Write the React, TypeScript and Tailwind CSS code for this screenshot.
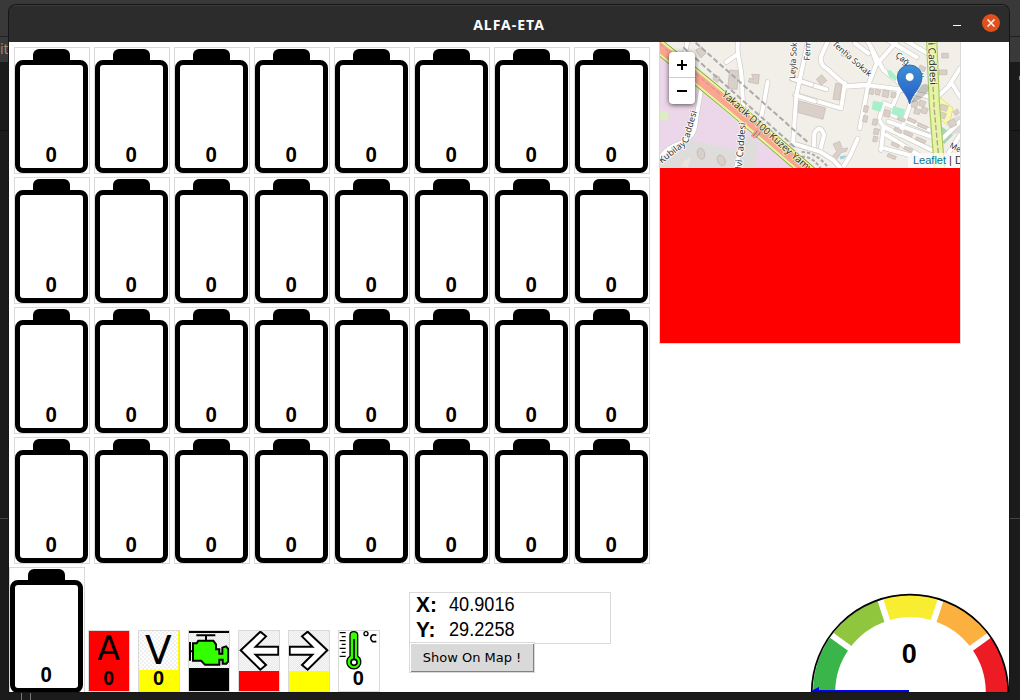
import React from "react";

const cells = Array.from({ length: 32 }, (_, i) => i);

function Battery({ className = "" }: { className?: string }) {
  return (
    <div className={`w-[76px] h-[127px] shrink-0 border border-[#d9d9d9] bg-white flex flex-col items-center pr-px pt-px ${className}`}>
      <div className="w-[37px] h-[11px] shrink-0 rounded-t-[6px] bg-black" />
      <div className="w-[73px] h-[113px] shrink-0 rounded-[8px] border-[5px] border-black bg-white flex items-end justify-center pb-[1px]">
        <span className="inline-block scale-x-[0.93] text-[22px] leading-[24px] font-bold">0</span>
      </div>
    </div>
  );
}

function Tile({ viewBox, children }: { viewBox: string; children: React.ReactNode }) {
  return (
    <div className="w-[42px] h-[62px] shrink-0 border border-[#d9d9d9] bg-white">
      <svg viewBox={viewBox} className="block w-[40px] h-[60px]">
        <defs>
          <pattern id="check" width="12" height="12" patternUnits="userSpaceOnUse">
            <rect width="12" height="12" fill="#fff" />
            <path d="M0 0h6v6h-6zM6 6h6v6h-6z" fill="#f0f0f0" />
          </pattern>
          <pattern id="fine" width="6" height="6" patternUnits="userSpaceOnUse">
            <rect width="6" height="6" fill="#f7f7f7" />
            <path d="M0 0h3v3h-3zM3 3h3v3h-3z" fill="#e9e9e9" />
          </pattern>
        </defs>
        {children}
      </svg>
    </div>
  );
}

const arrow = "M104 80H172L141 49L158 35L217 91L158 149L141 135L172 104H104Z";

const westRoads = [
  "M98 0L90 40",
  "M250 0Q244 30 254 70Q262 110 262 160L268 240L262 300L240 400",
  "M246 44L214 66",
  "M338 126L318 235",
  "M138 150L118 270Q110 295 70 312Q30 325 8 365",
  "M460 0L424 166L414 310L495 335L535 360L570 400",
  "M412 116L470 134M424 166L480 184",
];
const eastRoads = [
  "M70 0L48 50Q44 75 66 86L124 138L190 134L215 70L198 22M150 10L190 40M-40 116L64 148M120 130L108 205L-30 164",
  "M190 134L164 265M120 140L190 136L284 148L370 170L400 168",
  "M186 0L235 90L290 134M225 62L275 5M248 0L335 52M300 0L370 42",
  "M284 148L262 200L236 190L222 240L236 260L228 330M320 180L284 285M236 260L380 330M250 245L384 292M262 225L372 270M244 285L350 350M240 325L312 345",
  "M400 168L430 140L465 85M440 130L465 170M408 300L465 245M430 340L465 285M400 350L440 384",
  "M158 296L134 350L112 384M26 330L28 280Q45 250 57 285L46 330M-40 310L45 335L85 360L115 388",
];
const eastBuildings = [
  "M34 118L50 104L66 122L48 136Z", "M92 130l18 2-6 48-20-2z", "M-20 182l82 22-8 34-74-20z",
  "M194 146l14 4-4 14-13-3z", "M213 148l14 4-4 14-13-3z", "M235 150l18 3-4 20-18-4z", "M260 156l14 4-4 14-13-3z",
  "M178 196l13 3-4 18-13-2z", "M176 226l13 3-4 18-13-2z", "M205 236l15 3-5 17-14-2z", "M208 265l16 3-5 16-14-2z", "M206 288l13 3-4 15-12-2z",
  "M322 182l18 4-6 18-16-4z", "M345 180l18 6-6 14-16-4z", "M330 204l18 6-6 14-16-4z", "M352 200l18 6-6 16-16-4z", "M240 208l16 4-4 20-16-4z",
  "M280 228l22 10-4 9-22-10z", "M310 232l24 10-4 9-24-10z", "M340 248l28 12-4 9-28-12z", "M270 262l22 10-4 9-22-10z", "M300 272l24 10-4 9-24-10z", "M335 290l28 12-4 9-28-12z", "M262 305l22 10-4 9-22-10z", "M300 318l24 10-4 9-24-10z", "M250 340l24 10-4 9-24-10z",
  "M84 312L104 304L112 326L128 324L124 334L108 338L94 360L80 352L95 334Z",
  "M408 192l22 6-6 16-20-6z", "M406 215l18 6-6 16-14-6z", "M428 246l18-10 10 18-18 10z", "M445 215l12-8 6 12-12 8z",
  "M402 90h24v14h-24z", "M410 40h20v14h-20z", "M345 75l18 8-6 12-16-6z", "M112 28l22 8-6 18-20-8z",
];

function Roads({ paths }: { paths: string[] }) {
  return (
    <g fill="none" strokeLinejoin="round" strokeLinecap="round">
      {paths.map((d) => <path key={d} d={d} stroke="#cfccc8" strokeWidth="16" />)}
      {paths.map((d) => <path key={d} d={d} stroke="#fff" strokeWidth="12" />)}
    </g>
  );
}

function MapView() {
  return (
    <div className="relative h-[126px] w-[300px] overflow-hidden bg-[#f2efe9]">
      <svg width="300" height="126" viewBox="0 0 300 126" className="block" style={{ fontFamily: '"Noto Sans", sans-serif' }}>
        <defs>
          <linearGradient id="pin" x1="0" y1="0" x2="0" y2="1">
            <stop offset="0" stopColor="#3d8fd3" /><stop offset="1" stopColor="#245bc8" />
          </linearGradient>
        </defs>
        <g transform="translate(-5 -2) scale(.33333)">
          <path d="M15 48L140 155L230 230L420 390H-5Z" fill="#ebd7e9" />
          <path d="M92 298L250 330L240 390H15V350Z" fill="#dedddb" />
          <path d="M262 286L310 308L300 390H236Z" fill="#dedddb" />
          <path d="M15 213H40V241H15Z" fill="#dcedc4" />
          <g fill="#d9d0c9" stroke="#bfb3aa" strokeWidth="2">
            <path d="M122 30L140 20L154 38L138 54ZM224 90L251 92L246 148L218 146ZM290 103L313 104L310 132L280 126L284 114L296 118ZM178 104L195 112L188 128L174 118Z" />
            <ellipse cx="138" cy="341" rx="11" ry="17" transform="rotate(-12 138 341)" />
            <ellipse cx="199" cy="361" rx="11" ry="17" transform="rotate(-25 199 361)" />
            <path d="M88 362L108 352L98 384L80 378Z" fill="#eee5da" stroke="none" />
          </g>
        </g>
        <g transform="translate(145 -2) scale(.33333)">
          <path d="M408 258L445 285L418 312L404 300Z" fill="#a5d8b8" />
          <path d="M404 172L444 204L432 258L402 235Z" fill="#f8f8b0" stroke="#e4e47a" strokeWidth="3" />
          <path d="M424 245L465 225V275L440 285Z" fill="#dddcd9" />
          <Roads paths={eastRoads} />
          <g fill="#d9d0c9" stroke="#c5b8ad" strokeWidth="2">{eastBuildings.map((d) => <path key={d} d={d} />)}</g>
          <path d="M246 92L256 90L276 112L272 124L252 110ZM204 182L236 188L226 216L200 208ZM264 198L300 208L294 234L260 222Z" fill="#a7f0cb" />
          <path d="M380 0L388 190L404 390" stroke="#a9c765" strokeWidth="34" fill="none" />
          <path d="M380 0L388 190L404 390" stroke="#e5f5a2" strokeWidth="27" fill="none" />
          <path d="M384 140L388 210L400 340" stroke="#b59f94" strokeWidth="4" strokeDasharray="16 7" fill="none" />
          <path d="M104 349L126 346L116 357L106 358Z" fill="#9ed3df" />
          <path d="M-10 336Q30 335 68 380M-10 350Q24 348 50 390" stroke="#aaa" strokeWidth="6" strokeDasharray="10 6" fill="none" />
        </g>
        <g transform="translate(-5 -2) scale(.33333)">
          <Roads paths={westRoads} />
          <g fill="none">
            <path d="M122 8L462 310M85 22L420 322" stroke="#aaa" strokeWidth="6" strokeDasharray="16 8" />
            <path d="M-5 6L140 124L240 207L500 430" stroke="#86a539" strokeWidth="45" />
            <path d="M-5 6L140 124L240 207L500 430" stroke="#e6f6a2" strokeWidth="40" />
            <path d="M-5 6L140 124L240 207L500 430" stroke="#f9a58f" strokeWidth="28" />
            <path d="M14 12L200 166" stroke="#bf7f94" strokeWidth="2" strokeDasharray="14 6" />
            <path d="M292 292L314 266" stroke="#f5a090" strokeWidth="14" />
            <path d="M294 288L308 272M302 294L316 278" stroke="#777" strokeWidth="3" />
          </g>
          <g fill="#333" stroke="#fff" strokeWidth="5" paintOrder="stroke" strokeLinejoin="round">
            <text fontSize="29.5" stroke="#f3f3c0" transform="translate(199 166) rotate(41.5)">Yakacık D100 Kuzey Yamy</text>
            <text fontSize="27" transform="translate(20 371) rotate(-38)">Kubilay</text>
            <text fontSize="27" transform="translate(98 311) rotate(-74)">Caddesi</text>
            <text fontSize="28" transform="translate(260 388) rotate(-85)">lvi Caddesi</text>
            <text fontSize="25" transform="translate(420 116) rotate(-87)">Leyla Sokak</text>
            <text fontSize="25" transform="translate(464 62) rotate(-87)">Ferman</text>
          </g>
        </g>
        <g transform="translate(145 -2) scale(.33333)">
          <g fill="#333" stroke="#fff" strokeWidth="5" paintOrder="stroke" strokeLinejoin="round">
            <text fontSize="25" transform="translate(80 14) rotate(41)">Tenha Sokak</text>
            <text fontSize="25" transform="translate(270 48) rotate(40)">Çağ</text>
            <text fontSize="25" transform="translate(340 112) rotate(40)">k</text>
            <text fontSize="30" stroke="#f3f8d0" transform="translate(369 8) rotate(87)">i Caddesi</text>
            <text fontSize="24" transform="translate(432 322) rotate(25)">Mer</text>
          </g>
          <path d="M316 190L350 135Q375 125 370 152Q352 180 316 190Z" fill="#555" opacity=".3" />
          <path d="M314 192C307 160 278 145 277 111A37 36 0 0 1 351 111C350 145 321 160 314 192Z" fill="url(#pin)" stroke="#2f6fae" strokeWidth="3" />
          <circle cx="314" cy="111" r="13" fill="#fff" stroke="#3474b7" strokeWidth="2" />
        </g>
      </svg>
      <div className="absolute left-[9px] top-[10px] w-[26px] rounded-[4px] bg-white shadow-[0_1px_5px_rgba(0,0,0,0.65)]">
        <div className="h-[26px] border-b border-[#ccc] flex items-center justify-center"><svg width="10" height="10"><path d="M0 5H10M5 0V10" stroke="#000" strokeWidth="2" /></svg></div>
        <div className="h-[26px] flex items-center justify-center"><svg width="10" height="2"><path d="M0 1H10" stroke="#000" strokeWidth="2" /></svg></div>
      </div>
      <div className="absolute left-[248px] bottom-0 h-[15px] w-[90px] whitespace-nowrap bg-white/70 pl-[5px] text-[11px] leading-[15px] text-[#333]"><span className="text-[#0078a8]">Leaflet</span> | Data</div>
    </div>
  );
}

function arc(a: number, b: number) {
  const p = (r: number, d: number) => {
    const t = (d * Math.PI) / 180;
    return `${101.5 - r * Math.cos(t)} ${100.5 - r * Math.sin(t)}`;
  };
  return `M${p(97.5, a)}A97.5 97.5 0 0 1 ${p(97.5, b)}L${p(75.3, b)}A75.3 75.3 0 0 0 ${p(75.3, a)}Z`;
}

const bands = ["#39b54a", "#8fc63d", "#f9ed32", "#fbb040", "#ed1c24"];

function Gauge() {
  return (
    <svg width="200" height="100" viewBox="0 0 200 100" className="block self-end">
      {bands.map((c, i) => <path key={c} d={arc(i * 36, i * 36 + 36)} fill={c} />)}
      {[36, 72, 108, 144].map((a) => (
        <path key={a} d="M0 100.5H32" stroke="#fff" strokeWidth="6" transform={`rotate(${a} 101.5 100.5)`} />
      ))}
      <circle cx="101" cy="101" r="98.3" fill="none" stroke="#000" strokeWidth="1.7" />
      <text x="100.3" y="71" fontSize="27" fontWeight="700" textAnchor="middle">0</text>
      <path d="M3 98.5L10 95V98H100V100H3Z" fill="#00f" />
    </svg>
  );
}

export default function App() {
  return (
    <div className="relative flex h-[700px] w-[1020px] overflow-hidden bg-[#1b1b1b] pl-[9px] pt-[5px] text-black" style={{ fontFamily: '"Liberation Sans", Arial, sans-serif' }}>
      <div className="absolute inset-x-0 top-0 h-[62px] bg-[#393939]">
        <div className="h-[37px] border-b border-[#202020]" />
        <div className="pt-[4px] text-[14px] leading-[16px] text-[#a08a68]" style={{ fontFamily: '"Noto Sans", sans-serif' }}>it</div>
      </div>
      <div className="absolute inset-x-0 top-[130px] h-px bg-[#101010]" />
      <div className="absolute inset-x-0 top-[518px] h-px bg-[#444]" />
      <div className="absolute right-0 top-[76px] h-[4px] w-px bg-[#8976d8]" />
      <div className="absolute left-[21px] top-[693px] h-[7px] w-[10px] border-x border-[#777]" />
      <div className="relative w-[1000px] h-[687px] overflow-hidden rounded-t-[7px] shadow-[0_0_0_1px_#161616]">
        <header className="relative flex h-[37px] items-center justify-center bg-[#2c2c2c] border-t border-[#3a3a3a] text-[14px] font-bold tracking-[1px] text-white" style={{ fontFamily: '"Noto Sans", sans-serif' }}>
          <span>ALFA-ETA</span>
          <div className="absolute right-[9px] top-[8px] flex items-center gap-[21px]">
            <div className="mt-[4px] h-px w-[8px] bg-white" />
            <div className="flex h-[18px] w-[18px] items-center justify-center rounded-full bg-[#e2501c]"><svg width="8" height="8"><path d="M.5.5L7.5 7.5M7.5.5L.5 7.5" stroke="#fff" strokeWidth="1.5" /></svg></div>
          </div>
        </header>
        <main className="flex h-[650px] overflow-hidden bg-white">
          <section className="w-[650px] shrink-0 pt-[5px]">
            <div className="grid grid-cols-[repeat(8,76px)] gap-x-[4px] gap-y-[3px] pl-[5px]">
              {cells.map((i) => <Battery key={i} />)}
            </div>
            <div className="mt-[3px] flex h-[125px]">
              <Battery className="mr-[3px]" />
              <div className="flex items-end gap-[8px]">
                <Tile viewBox="267 213 120 180">
                  <rect x="267" y="213" width="120" height="180" fill="#f00" />
                  <text x="326" y="299" fontSize="100" textAnchor="middle" style={{ fontFamily: '"DejaVu Sans"' }}>A</text>
                  <text x="326" y="374" fontSize="58" fontWeight="700" textAnchor="middle">0</text>
                </Tile>
                <Tile viewBox="27 33 120 180">
                  <rect x="27" y="33" width="120" height="120" fill="url(#check)" />
                  <path d="M144 33h3v180h-120v-63h117z" fill="#ff0" />
                  <text x="85" y="131" fontSize="117" textAnchor="middle" style={{ fontFamily: '"DejaVu Sans"' }}>V</text>
                  <text x="86" y="195" fontSize="60" fontWeight="700" textAnchor="middle">0</text>
                </Tile>
                <Tile viewBox="177 33 120 180">
                  <rect x="177" y="33" width="120" height="120" fill="url(#fine)" />
                  <path d="M177 33h120v6h-120zM177 144h120v69h-120z" />
                  <path d="M199 46H256M228 46V63M180 66V122M180 94H190" stroke="#000" strokeWidth="6" fill="none" />
                  <path d="M205 62H250L258 73V88H268V101H277V83L288 79L295 87V124L289 131H278V119H268V134H225L213 122H189V70H200Z" fill="#3f0" stroke="#000" strokeWidth="6" />
                </Tile>
                <Tile viewBox="102 33 120 180">
                  <rect x="102" y="33" width="120" height="120" fill="url(#fine)" />
                  <path d={arrow} transform="translate(324 0) scale(-1 1)" fill="#fff" stroke="#000" strokeWidth="6" />
                  <rect x="102" y="153" width="120" height="60" fill="#f00" />
                </Tile>
                <Tile viewBox="102 33 120 180">
                  <rect x="102" y="33" width="120" height="120" fill="url(#fine)" />
                  <path d={arrow} fill="#fff" stroke="#000" strokeWidth="6" />
                  <rect x="102" y="153" width="120" height="60" fill="#ff0" />
                </Tile>
                <Tile viewBox="252 33 120 180">
                  <path d="M254 38H272M260 50H272M254 62H272M260 73H272M254 85H272M260 97H272M254 109H272" stroke="#000" strokeWidth="4" />
                  <path d="M285 45Q285 35 296 35Q308 35 308 45V108A21 21 0 1 1 285 108Z" fill="#3f0" stroke="#000" strokeWidth="4" />
                  <path d="M297 57V120" stroke="#000" strokeWidth="5" />
                  <circle cx="297" cy="127" r="9" fill="#fff" stroke="#000" strokeWidth="5" />
                  <circle cx="333" cy="41" r="6" fill="none" stroke="#000" strokeWidth="4" />
                  <path d="M364 46Q350 40 347 54Q348 69 364 64" fill="none" stroke="#000" strokeWidth="5" />
                  <text x="310" y="195" fontSize="60" fontWeight="700" textAnchor="middle">0</text>
                </Tile>
              </div>
              <div className="ml-[29px] mt-[25px] w-[202px]">
                <div className="h-[52px] border border-[#d9d9d9] pl-[6px] text-[19.5px] leading-[25px]">
                  <div className="-mt-px flex"><b className="w-[33px] origin-left scale-x-[0.95] text-[22px]">X:</b><span className="origin-left scale-x-[0.93]">40.9016</span></div>
                  <div className="flex"><b className="w-[33px] origin-left scale-x-[0.95] text-[22px]">Y:</b><span className="origin-left scale-x-[0.93]">29.2258</span></div>
                </div>
                <div className="relative -mt-[2px] h-[31px] w-[126px] border border-[#d9d9d9] bg-white">
                  <button className="mt-px ml-px block h-[28px] w-[123px] border-b border-r border-[#828282] bg-[#d9d9d9] text-[13px] leading-[26px]" style={{ fontFamily: '"DejaVu Sans", sans-serif' }}>Show On Map !</button>
                </div>
              </div>
            </div>
          </section>
          <section className="flex w-[350px] shrink-0 flex-col justify-between">
            <div className="w-[302px] border-x border-b border-[#d9d9d9]">
              <MapView />
              <div className="h-[175px] bg-[#f00]" />
            </div>
            <Gauge />
          </section>
        </main>
      </div>
    </div>
  );
}
